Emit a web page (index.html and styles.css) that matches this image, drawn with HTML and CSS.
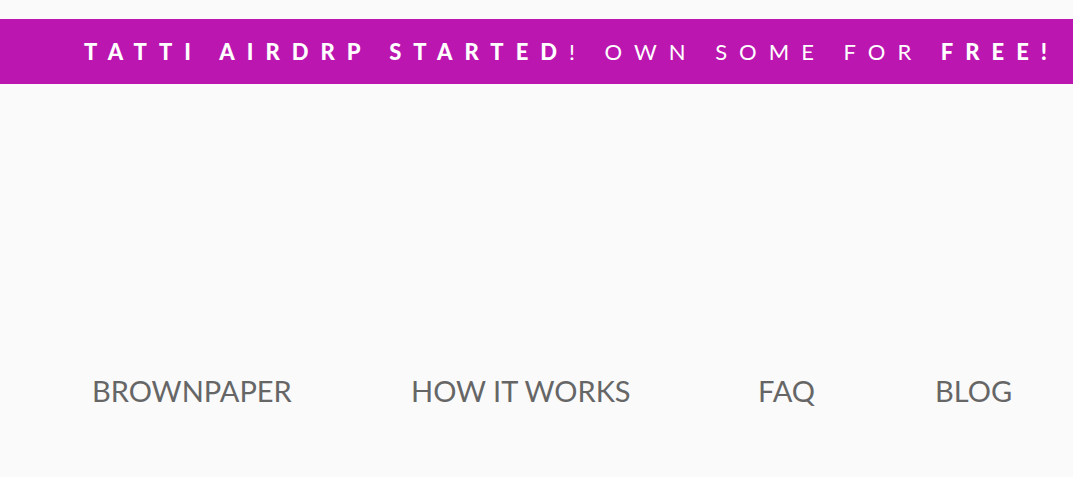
FILE: index.html
```html
<!DOCTYPE html>
<html>
<head>
<meta charset="utf-8">
<link rel="stylesheet" href="styles.css">
</head>
<body>
<div class="banner"><span class="b">TATTI AIRDRP STARTED</span>! OWN SOME FOR <span class="b">FREE!</span></div>
<nav class="nav">
  <a class="link">BROWNPAPER</a>
  <a class="link">HOW IT WORKS</a>
  <a class="link">FAQ</a>
  <a class="link">BLOG</a>
</nav>
</body>
</html>
```
FILE: styles.css
```css
html, body {
  margin: 0;
  padding: 0;
  background: #fafafa;
}
body {
  padding-top: 19px;
  overflow: hidden;
  width: 1073px;
  height: 477px;
}
.banner {
  height: 65px;
  background: #bc16b0;
  color: #fff;
  font-family: Lato, "Liberation Sans", sans-serif;
  font-size: 22px;
  letter-spacing: 12px;
  line-height: 66px;
  white-space: nowrap;
  padding-left: 84px;
  box-sizing: border-box;
}
.banner .b {
  font-weight: 900;
}
.nav {
  display: grid;
  grid-template-columns: 319px 347px 177px auto;
  padding-left: 92px;
  margin-top: 289px;
}
.link {
  font-family: Lato, "Liberation Sans", sans-serif;
  font-size: 29px;
  color: #666;
  line-height: 36px;
}
```
